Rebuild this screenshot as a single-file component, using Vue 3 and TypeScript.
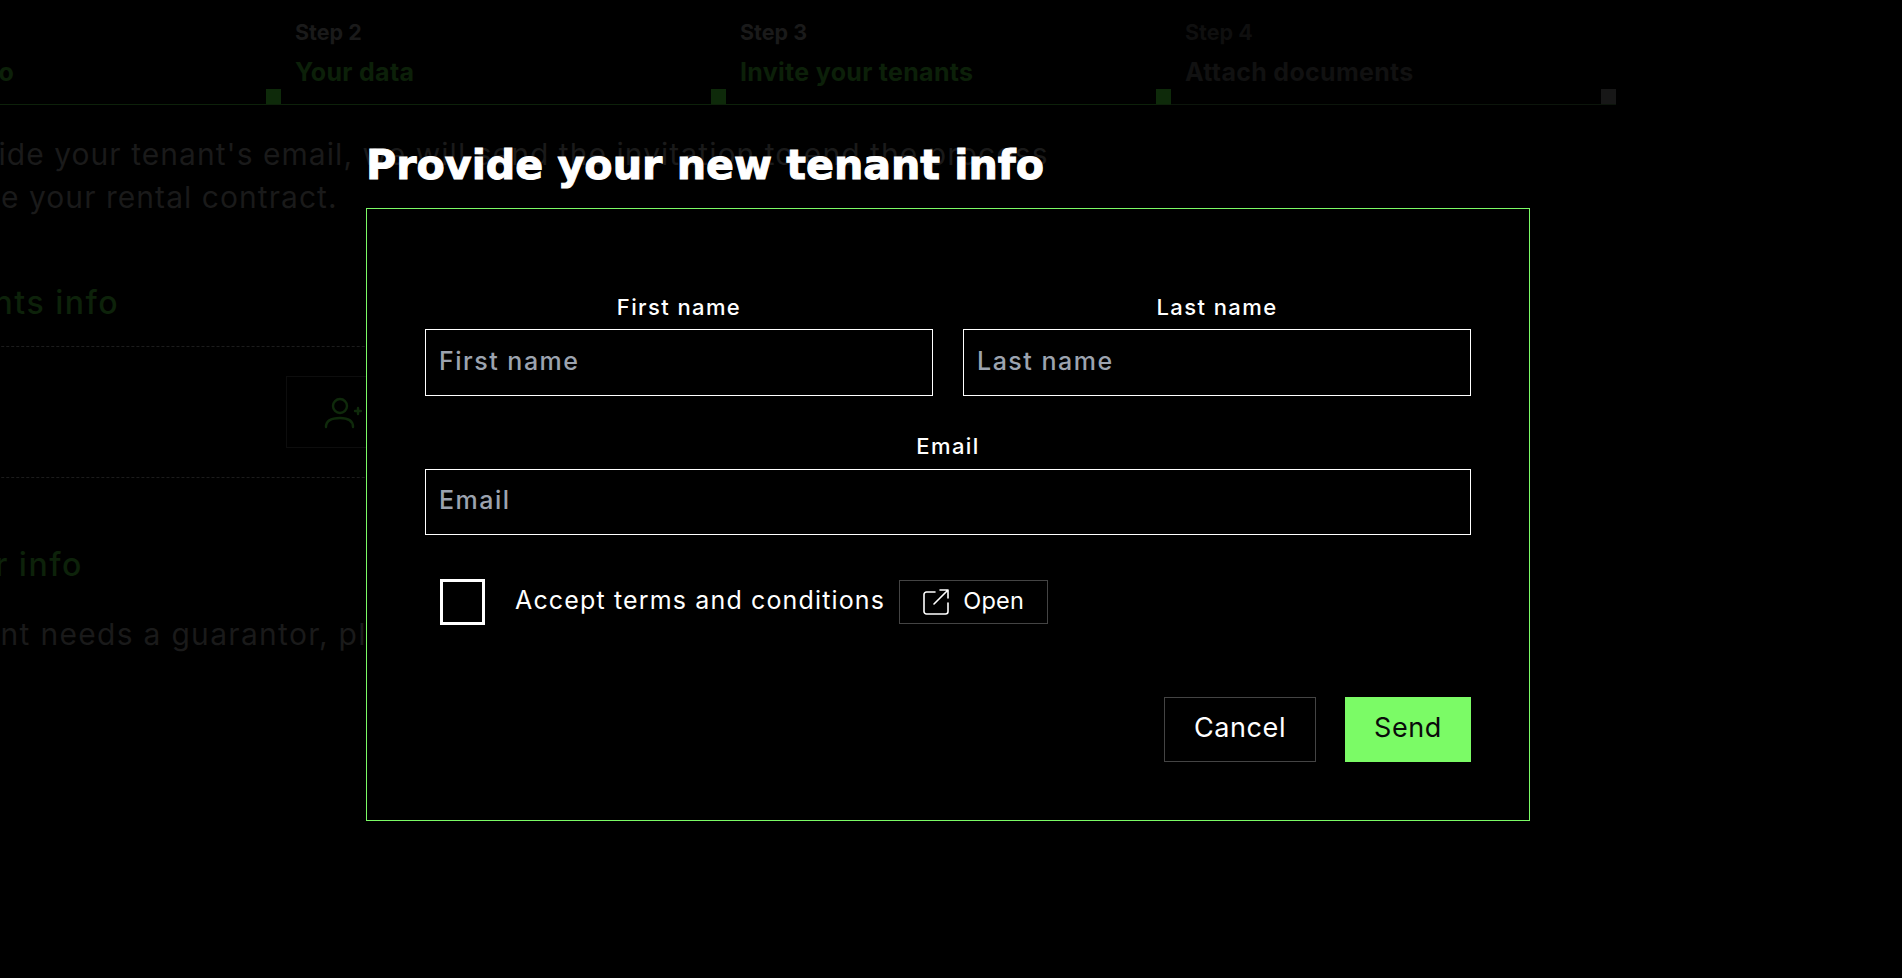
<script setup lang="ts">
interface Step { no: string; title: string; off?: boolean }
const steps: Step[] = [
  { no: 'Step 1', title: 'Property info' },
  { no: 'Step 2', title: 'Your data' },
  { no: 'Step 3', title: 'Invite your tenants' },
  { no: 'Step 4', title: 'Attach documents', off: true },
]
</script>

<template>
  <div class="page">
    <div class="back">
      <div class="steps">
        <div v-for="s in steps" :key="s.no" class="step" :class="{ off: s.off }">
          <div class="step-text">
            <div class="step-no">{{ s.no }}</div>
            <div class="step-title">{{ s.title }}</div>
          </div>
          <span class="marker"></span>
        </div>
      </div>
      <p class="intro">Provide your tenant's email, we will send the invitation to end the process<span class="intro-2">finalize your rental contract.</span></p>
      <h2 class="sec sec-tenants">Tenants info</h2>
      <div class="tenant-row">
        <div class="add">
          <svg width="38" height="34" viewBox="0 0 38 34" fill="none" stroke="#0f2a0b" stroke-width="2.4" stroke-linecap="round">
            <circle cx="16" cy="9" r="7" />
            <path d="M2 30c0-6 5-9 14-9s13 3 13 9" />
            <path d="M31 14h6M34 11v6" />
          </svg>
        </div>
      </div>
      <h2 class="sec sec-guarantor">Guarantor info</h2>
      <p class="guarantor">If your tenant needs a guarantor, please add the guarantor's info here.</p>
    </div>

    <div class="overlay">
      <div class="dialog">
        <h1 class="title">Provide your new tenant info</h1>
        <form class="modal">
          <div class="names">
            <label class="field">
              <span class="lab">First name</span>
              <input class="inp" type="text" placeholder="First name" />
            </label>
            <label class="field">
              <span class="lab">Last name</span>
              <input class="inp" type="text" placeholder="Last name" />
            </label>
          </div>
          <label class="field email">
            <span class="lab lab-email">Email</span>
            <input class="inp inp-email" type="email" placeholder="Email" />
          </label>
          <div class="terms">
            <input class="check" type="checkbox" />
            <span class="terms-text">Accept terms and conditions</span>
            <button class="open" type="button">
              <svg width="26" height="26" viewBox="0 0 26 26" fill="none" stroke="#fff" stroke-width="1.6" stroke-linecap="round" stroke-linejoin="round">
                <path d="M12 3H3.500A2.500 2.500 0 0 0 1 5.500V22.500A2.500 2.500 0 0 0 3.500 25H22.500A2.500 2.500 0 0 0 25 22.500V14" />
                <path d="M11 15L25 1M17 1h8v8" />
              </svg>
              <span class="open-text">Open</span>
            </button>
          </div>
          <div class="actions">
            <button class="btn cancel" type="button">Cancel</button>
            <button class="btn send" type="button">Send</button>
          </div>
        </form>
      </div>
    </div>
  </div>
</template>

<style>
html, body { background: #000; overflow: hidden; }
</style>

<style scoped>
.page {
  position: relative;
  width: 1902px;
  height: 978px;
  overflow: hidden;
  background: #000;
  font-family: Inter, "Liberation Sans", sans-serif;
}
.back { margin-left: -164px; width: 2000px; }
.steps { display: flex; width: 1780px; padding-top: 16px; }
.step {
  flex: 0 0 445px;
  height: 89px;
  box-sizing: border-box;
  display: flex;
  justify-content: space-between;
  align-items: flex-end;
  border-bottom: 1px solid #0d210a;
  padding-left: 14px;
}
.step-text { align-self: flex-start; margin-top: 2px; }
.step-no { font-size: 21.5px; line-height: 28px; font-weight: 700; color: #1a1a1a; }
.step-title { font-size: 25px; line-height: 30px; margin-top: 11px; font-weight: 700; letter-spacing: .3px; color: #0c2009; }
.marker { width: 15px; height: 15px; background: #0e2a0a; }
.step.off { border-bottom-color: #0c150b; }
.off .step-no { color: #0f0f0f; }
.off .step-title { color: #111; }
.off .marker { background: #171717; }
.intro {
  margin: 28px 0 0 94px;
  font-size: 30px;
  line-height: 43px;
  letter-spacing: 1.05px;
  color: #1a1a1a;
}
.intro-2 { display: block; margin-left: -20px; }
.sec { margin: 0; font-size: 32px; line-height: 40px; font-weight: 500; color: #0d220a; letter-spacing: 1.5px; }
.sec-tenants { margin: 64px 0 0 77px; }
.tenant-row {
  margin-top: 23px;
  width: 1500px;
  height: 132px;
  box-sizing: border-box;
  border-top: 1px dashed #1c1c1c;
  border-bottom: 1px dashed #1c1c1c;
  padding: 29px 0 0 450px;
}
.add {
  width: 260px;
  height: 72px;
  box-sizing: border-box;
  border: 1px solid #0d0d0d;
  padding: 20px 0 0 37px;
}
.sec-guarantor { margin: 67px 0 0 6px; }
.guarantor { margin: 29px 0 0 -12px; font-size: 30px; line-height: 40px; letter-spacing: 1.3px; color: #1a1a1a; }

.overlay {
  position: absolute;
  inset: 0;
  padding: 141px 0 0 366px;
  box-sizing: border-box;
}
.dialog { width: 1164px; }
.title {
  margin: 0;
  height: 67px;
  font-family: "DejaVu Sans", sans-serif;
  font-size: 41.2px;
  line-height: 48px;
  font-weight: 700;
  -webkit-text-stroke: 1px #fff;
  color: #fff;
}
.modal {
  height: 613px;
  box-sizing: border-box;
  border: 1.5px solid #7bfb66;
  background: #000;
  padding: 82px 58px 0;
  color: #fff;
}
.names { display: grid; grid-template-columns: 508px 508px; column-gap: 30px; }
.field { display: flex; flex-direction: column; }
.email { margin-top: 34px; }
.lab { text-align: center; font-size: 22px; line-height: 32px; padding-bottom: 6px; letter-spacing: 1.4px; font-weight: 500; }
.lab-email { padding-bottom: 7px; }
.inp {
  height: 67px;
  box-sizing: border-box;
  background: #000;
  border: 1px solid #fff;
  border-radius: 0;
  padding: 0 13px 4px;
  outline: none;
  color: #fff;
  font-family: inherit;
  font-size: 25px;
  font-weight: 500;
  letter-spacing: 1.5px;
}
.inp-email { height: 66px; }
.inp::placeholder { color: #9ca3af; opacity: 1; }
.terms { display: flex; align-items: flex-start; margin-top: 44px; padding-left: 15px; }
.check {
  appearance: none;
  width: 45px;
  height: 46px;
  margin: 0;
  box-sizing: border-box;
  border: 3px solid #fff;
  background: #000;
}
.terms-text { margin: 4px 0 0 30px; font-size: 25px; line-height: 34px; letter-spacing: 1.15px; }
.open {
  margin: 1px 0 0 14px;
  width: 149px;
  height: 44px;
  box-sizing: border-box;
  display: flex;
  align-items: center;
  gap: 14px;
  padding: 0 0 0 23px;
  background: #000;
  border: 1px solid #444;
  color: #fff;
  font-family: inherit;
  font-size: 23.5px;
  letter-spacing: .3px;
}
.open-text { margin-bottom: 3px; }
.actions { display: flex; justify-content: flex-end; gap: 29px; margin-top: 72px; }
.btn {
  height: 65px;
  box-sizing: border-box;
  font-family: inherit;
  font-size: 27px;
  letter-spacing: .6px;
  padding: 0 0 5px;
  border-radius: 0;
}
.cancel { width: 152px; background: #000; color: #fff; border: 1px solid #444; }
.send { width: 126px; background: #7bfb66; color: #0a0a0a; border: none; }
</style>
